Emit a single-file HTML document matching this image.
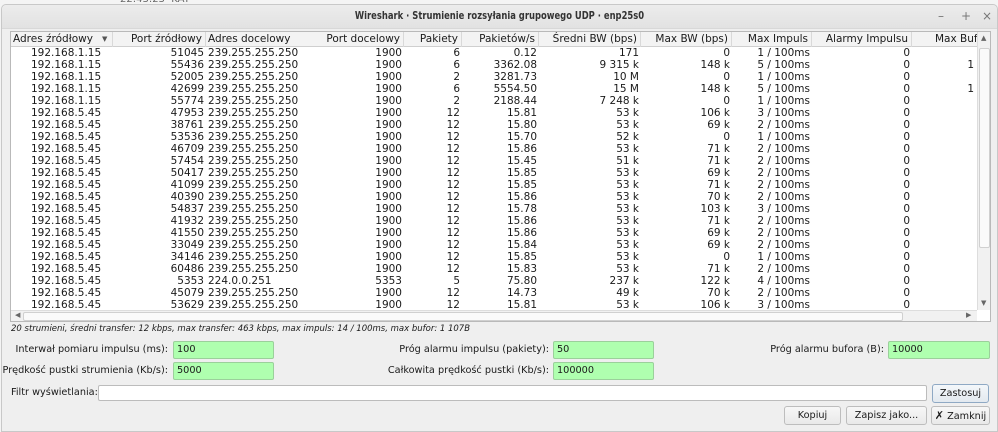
<!DOCTYPE html>
<html><head><meta charset="utf-8"><style>
*{box-sizing:border-box;margin:0;padding:0}
body{width:998px;height:432px;overflow:hidden;background:#f4f4f4;font-family:"DejaVu Sans","Liberation Sans",sans-serif;font-size:10.5px;color:#1a1a1a;position:relative}
.dlg{position:absolute;left:1px;top:4px;width:997px;height:428px;background:#efefef;border:1px solid #c8c8c8;border-radius:5px 5px 0 0}
.title{position:absolute;left:0;top:0;width:100%;height:24px;background:linear-gradient(#ececec,#e2e2e2);border-bottom:1px solid #d8d8d8;border-radius:5px 5px 0 0}
.tt{position:absolute;left:0;width:100%;top:0;text-align:center;font-weight:bold;font-size:10.5px;line-height:23px;color:#333;transform:scaleX(0.8)}
.wc{position:absolute;top:0;font-size:12px;color:#777;line-height:23px;font-weight:normal}
.tbl{position:absolute;left:10px;top:31px;width:981px;height:291px;background:#fff;border:1px solid #b9b9b9;overflow:hidden}
.hdr{position:absolute;left:0;top:0;height:15px;width:966px;background:#f3f3f3;border-bottom:1px solid #cfcfcf}
.hdr div{position:absolute;top:0;height:15px;line-height:14px;border-right:1px solid #d9d9d9;text-align:right;padding-right:3px;white-space:nowrap;overflow:hidden}
.row{position:absolute;left:0;height:12px;width:966px;line-height:12px}
.row div{position:absolute;top:0;text-align:right;white-space:nowrap;overflow:hidden}
.vs{position:absolute;left:966px;top:0;width:14px;height:278px;background:#f1f1f1;border-left:1px solid #ddd}
.hs{position:absolute;left:0;top:278px;width:966px;height:12px;background:#f1f1f1;border-top:1px solid #ddd}
.lbl{position:absolute;white-space:nowrap;font-size:9.7px}
.in{position:absolute;height:18px;background:#afffaf;border:1px solid #9bd09b;border-radius:2px;padding-left:3px;line-height:16px;font-size:9.7px}
.btn{position:absolute;height:19px;border:1px solid #bdbdbd;border-radius:3px;background:linear-gradient(#f7f7f7,#e9e9e9);text-align:center;line-height:17px;font-size:9.7px}
</style></head><body>
<div style="position:absolute;left:120px;top:-6px;font-size:10px;color:#666">22:43:23 &nbsp;KAT</div>
<div class="dlg">
<div class="title"><div class="tt">Wireshark · Strumienie rozsyłania grupowego UDP · enp25s0</div>
<span class="wc" style="left:936px">–</span><span class="wc" style="left:959px">+</span><span class="wc" style="left:980px">×</span></div>
</div>
<div class="tbl" id="t">
<div class="hdr">
<div style="left:0;width:102px;text-align:left;padding-left:2px">Adres źródłowy <span style="position:absolute;left:91px;font-size:7px;color:#555">▼</span></div>
<div style="left:102px;width:93px">Port źródłowy</div>
<div style="left:195px;width:102px;text-align:left;padding-left:2px;border-right:none">Adres docelowy</div>
<div style="left:297px;width:96px">Port docelowy</div>
<div style="left:393px;width:58px">Pakiety</div>
<div style="left:451px;width:77px">Pakietów/s</div>
<div style="left:528px;width:102px">Średni BW (bps)</div>
<div style="left:630px;width:91px">Max BW (bps)</div>
<div style="left:721px;width:80px">Max Impuls</div>
<div style="left:801px;width:100px">Alarmy Impulsu</div>
<div style="left:901px;width:70px;text-align:left;padding-left:23px">Max Bufor</div>
</div>
<div class="vs"><div style="position:absolute;top:2px;left:3px;font-size:7px;color:#666">▲</div><div style="position:absolute;top:267px;left:3px;font-size:7px;color:#666">▼</div><div style="position:absolute;top:16px;left:1px;width:11px;height:200px;background:#fafafa;border:1px solid #d0d0d0;border-radius:2px"></div></div>
<div class="hs"><div style="position:absolute;left:4px;top:0;font-size:7px;color:#666">◀</div><div style="position:absolute;left:955px;top:0;font-size:7px;color:#666">▶</div><div style="position:absolute;left:12px;top:1px;width:880px;height:9px;background:#fafafa;border:1px solid #d0d0d0;border-radius:2px"></div></div>
</div>
<script>
var d=[
["192.168.1.15","51045","239.255.255.250","1900","6","0.12","171","0","1 / 100ms","0",""],
["192.168.1.15","55436","239.255.255.250","1900","6","3362.08","9 315 k","148 k","5 / 100ms","0","1"],
["192.168.1.15","52005","239.255.255.250","1900","2","3281.73","10 M","0","1 / 100ms","0",""],
["192.168.1.15","42699","239.255.255.250","1900","6","5554.50","15 M","148 k","5 / 100ms","0","1"],
["192.168.1.15","55774","239.255.255.250","1900","2","2188.44","7 248 k","0","1 / 100ms","0",""],
["192.168.5.45","47953","239.255.255.250","1900","12","15.81","53 k","106 k","3 / 100ms","0",""],
["192.168.5.45","38761","239.255.255.250","1900","12","15.80","53 k","69 k","2 / 100ms","0",""],
["192.168.5.45","53536","239.255.255.250","1900","12","15.70","52 k","0","1 / 100ms","0",""],
["192.168.5.45","46709","239.255.255.250","1900","12","15.86","53 k","71 k","2 / 100ms","0",""],
["192.168.5.45","57454","239.255.255.250","1900","12","15.45","51 k","71 k","2 / 100ms","0",""],
["192.168.5.45","50417","239.255.255.250","1900","12","15.85","53 k","69 k","2 / 100ms","0",""],
["192.168.5.45","41099","239.255.255.250","1900","12","15.85","53 k","71 k","2 / 100ms","0",""],
["192.168.5.45","40390","239.255.255.250","1900","12","15.86","53 k","70 k","2 / 100ms","0",""],
["192.168.5.45","54837","239.255.255.250","1900","12","15.78","53 k","103 k","3 / 100ms","0",""],
["192.168.5.45","41932","239.255.255.250","1900","12","15.86","53 k","71 k","2 / 100ms","0",""],
["192.168.5.45","41550","239.255.255.250","1900","12","15.86","53 k","69 k","2 / 100ms","0",""],
["192.168.5.45","33049","239.255.255.250","1900","12","15.84","53 k","69 k","2 / 100ms","0",""],
["192.168.5.45","34146","239.255.255.250","1900","12","15.85","53 k","0","1 / 100ms","0",""],
["192.168.5.45","60486","239.255.255.250","1900","12","15.83","53 k","71 k","2 / 100ms","0",""],
["192.168.5.45","5353","224.0.0.251","5353","5","75.80","237 k","122 k","4 / 100ms","0",""],
["192.168.5.45","45079","239.255.255.250","1900","12","14.73","49 k","70 k","2 / 100ms","0",""],
["192.168.5.45","53629","239.255.255.250","1900","12","15.81","53 k","106 k","3 / 100ms","0",""]];
var cols=[[0,102,"c"],[102,91,"r"],[197,100,"l"],[297,94,"r"],[393,56,"r"],[451,75,"r"],[528,100,"r"],[630,89,"r"],[721,78,"r"],[801,98,"r"],[901,64,"r"]];
var h="";
d.forEach(function(r,i){h+='<div class="row" style="top:'+(15+i*12)+'px">';
r.forEach(function(v,j){var c=cols[j];var s='left:'+c[0]+'px;width:'+c[1]+'px;';
if(c[2]=="l")s+='text-align:left;';if(c[2]=="c")s+='text-align:left;padding-left:20px;';
if(j==10)s+='text-align:right;padding-right:2px;';
h+='<div style="'+s+'">'+v+'</div>';});h+='</div>';});
document.getElementById('t').insertAdjacentHTML('afterbegin',h);
</script>
<div class="lbl" style="left:11px;top:324px;font-style:italic;font-size:8.5px">20 strumieni, średni transfer: 12 kbps, max transfer: 463 kbps, max impuls: 14 / 100ms, max bufor: 1 107B</div>
<div class="lbl" style="left:0px;width:168px;top:344px;text-align:right">Interwał pomiaru impulsu (ms):</div>
<div class="in" style="left:173px;top:341px;width:101px">100</div>
<div class="lbl" style="left:330px;width:219px;top:344px;text-align:right">Próg alarmu impulsu (pakiety):</div>
<div class="in" style="left:553px;top:341px;width:101px">50</div>
<div class="lbl" style="left:700px;width:184px;top:344px;text-align:right">Próg alarmu bufora (B):</div>
<div class="in" style="left:888px;top:341px;width:102px">10000</div>
<div class="lbl" style="left:0px;width:168px;top:365px;text-align:right">Prędkość pustki strumienia (Kb/s):</div>
<div class="in" style="left:173px;top:362px;width:101px">5000</div>
<div class="lbl" style="left:330px;width:219px;top:365px;text-align:right">Całkowita prędkość pustki (Kb/s):</div>
<div class="in" style="left:553px;top:362px;width:101px">100000</div>
<div class="lbl" style="left:11px;top:387px">Filtr wyświetlania:</div>
<div style="position:absolute;left:98px;top:385px;width:829px;height:16px;background:#fff;border:1px solid #bcbcbc;border-radius:2px"></div>
<div class="btn" style="left:932px;top:384px;width:57px;border-color:#8fa9c4;background:linear-gradient(#f4f7fa,#e3e9ef)">Zastosuj</div>
<div class="btn" style="left:784px;top:406px;width:57px">Kopiuj</div>
<div class="btn" style="left:846px;top:406px;width:81px">Zapisz jako...</div>
<div class="btn" style="left:931px;top:406px;width:59px"><b style="font-size:11px">✗</b> Zamknij</div>
</body></html>
